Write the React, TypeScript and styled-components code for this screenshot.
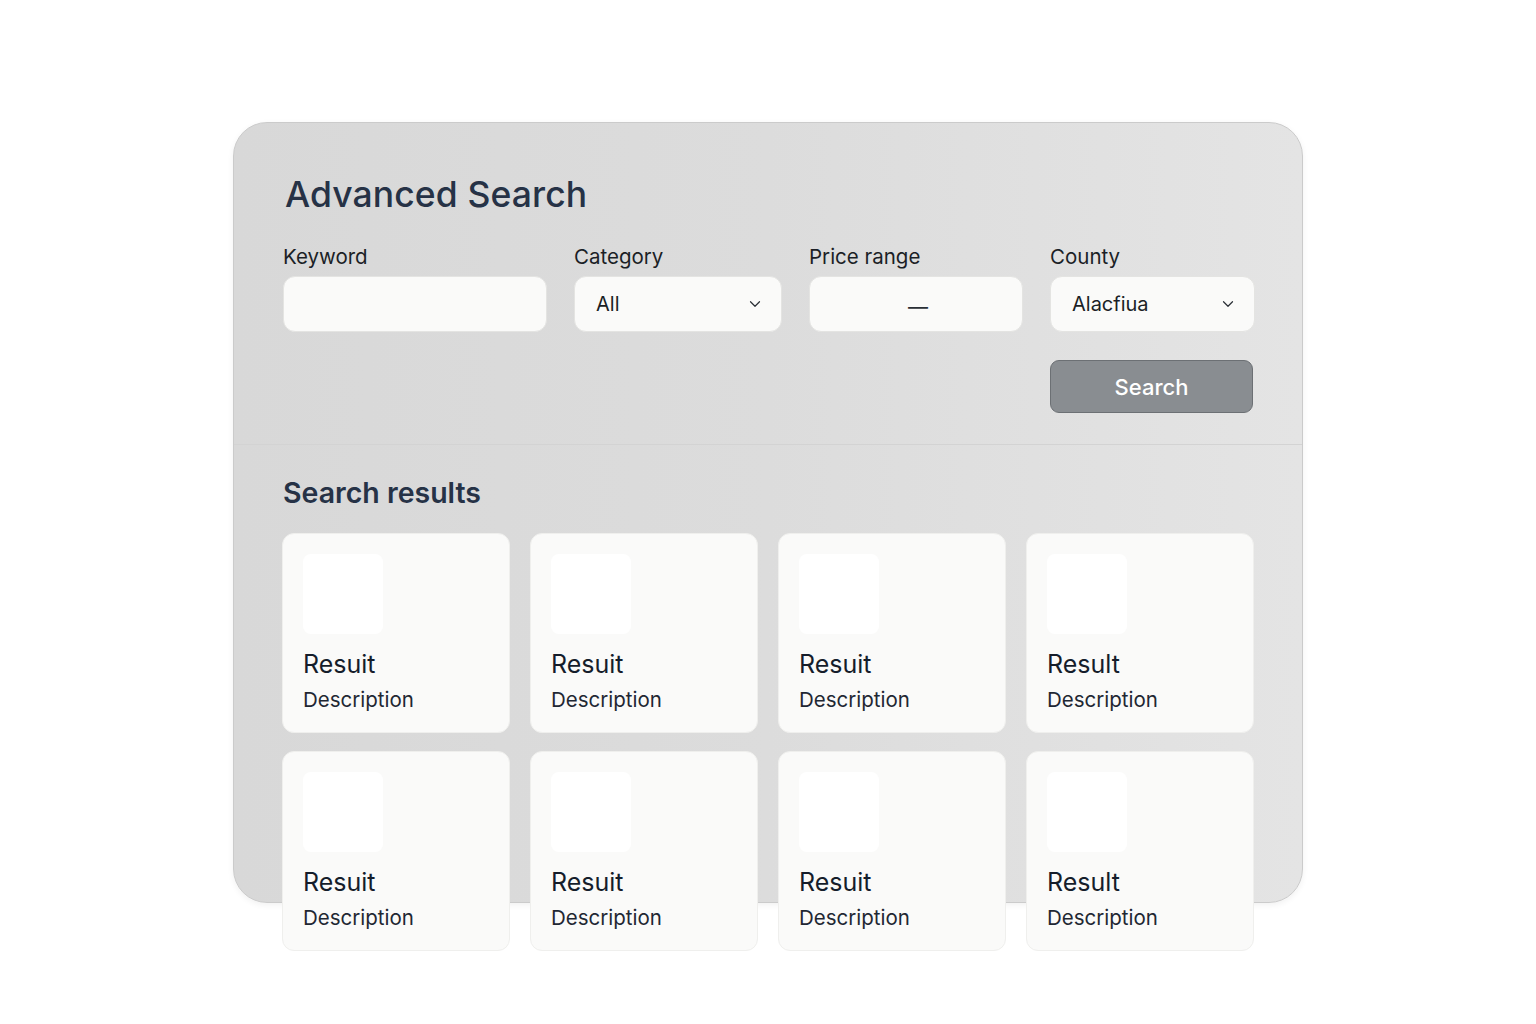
import React from "react";
import styled, { createGlobalStyle } from "styled-components";
import { ChevronDown } from "lucide-react";

const Global = createGlobalStyle`
  html, body { margin: 0; padding: 0; background: #ffffff; }
  body { font-family: Inter, "Noto Sans", "Liberation Sans", sans-serif; color: #1c2430; }
  * { box-sizing: border-box; }
`;

const Page = styled.div`
  width: 1536px;
  min-height: 1024px;
  padding-top: 122px;
  display: flex;
  justify-content: center;
  align-items: flex-start;
`;

const Panel = styled.section`
  width: 1070px;
  height: 781px;
  border-radius: 34px;
  border: 1px solid #cbcbcb;
  background: linear-gradient(90deg, #d8d8d8 0%, #dcdcdc 50%, #e4e4e4 100%);
  box-shadow: 0 2px 6px rgba(0, 0, 0, 0.06);
  display: flex;
  flex-direction: column;
`;

const TopSection = styled.div`
  padding: 50px 48px 31px 49px;
  display: flex;
  flex-direction: column;
`;

const Title = styled.h1`
  margin: 0 0 28px 2px;
  font-size: 35.5px;
  line-height: 44px;
  font-weight: 500;
  color: #263246;
  letter-spacing: 0.1px;
`;

const FieldsRow = styled.div`
  display: grid;
  grid-template-columns: 264px 208px 214px 205px;
  column-gap: 27px;
`;

const Field = styled.div`
  display: flex;
  flex-direction: column;
  gap: 7px;
`;

const Label = styled.label`
  font-size: 20.5px;
  line-height: 24px;
  color: #1b1f26;
`;

const Control = styled.div<{ $center?: boolean }>`
  height: 56px;
  border-radius: 12px;
  background: #fafaf9;
  border: 1px solid #e4e4e2;
  display: flex;
  align-items: center;
  justify-content: ${(p) => (p.$center ? "center" : "space-between")};
  padding: 0 17px 0 21px;
  font-size: 20px;
  color: #1b1f26;
`;

const Dash = styled.span`
  font-size: 20px;
  color: #2a2f36;
  margin-top: 6px;
`;

const Chevron = styled(ChevronDown)`
  width: 18px;
  height: 18px;
  color: #2a2f36;
`;

const ButtonRow = styled.div`
  display: flex;
  justify-content: flex-end;
  margin-top: 28px;
  padding-right: 1px;
`;

const SearchButton = styled.button`
  width: 203px;
  height: 53px;
  border-radius: 9px;
  background: #898d91;
  border: 1px solid #6c7074;
  color: #ffffff;
  font-family: inherit;
  font-size: 22px;
  font-weight: 500;
  cursor: pointer;
`;

const Divider = styled.div`
  height: 3px;
  width: 100%;
  background: #e9e9e9;
  border-top: 1px solid #d3d3d3;
`;

const ResultsSection = styled.div`
  padding: 30px 48px 0 48px;
  display: flex;
  flex-direction: column;
`;

const Subtitle = styled.h2`
  margin: 0 0 22px 1px;
  font-size: 28.5px;
  line-height: 36px;
  font-weight: 600;
  color: #263246;
`;

const CardGrid = styled.div`
  display: grid;
  grid-template-columns: repeat(4, 1fr);
  column-gap: 20px;
  row-gap: 18px;
`;

const Card = styled.div`
  height: 200px;
  border-radius: 12px;
  background: #fafaf9;
  border: 1px solid #efefed;
  padding: 20px 20px 0 20px;
  display: flex;
  flex-direction: column;
`;

const Thumb = styled.div`
  width: 80px;
  height: 80px;
  border-radius: 8px;
  background: #ffffff;
  margin-bottom: 15px;
`;

const CardTitle = styled.div`
  font-size: 25px;
  line-height: 30px;
  color: #151d2b;
  margin-bottom: 8px;
`;

const CardDesc = styled.div`
  font-size: 20.5px;
  line-height: 26px;
  color: #1f2733;
`;

const results = [
  "Resuit", "Resuit", "Resuit", "Result",
  "Resuit", "Resuit", "Resuit", "Result",
];

export default function App() {
  return (
    <>
      <Global />
      <Page>
        <Panel>
          <TopSection>
            <Title>Advanced Search</Title>
            <FieldsRow>
              <Field>
                <Label>Keyword</Label>
                <Control />
              </Field>
              <Field>
                <Label>Category</Label>
                <Control>
                  <span>All</span>
                  <Chevron strokeWidth={1.6} />
                </Control>
              </Field>
              <Field>
                <Label>Price range</Label>
                <Control $center>
                  <Dash>—</Dash>
                </Control>
              </Field>
              <Field>
                <Label>County</Label>
                <Control>
                  <span>Alacfiua</span>
                  <Chevron strokeWidth={1.6} />
                </Control>
              </Field>
            </FieldsRow>
            <ButtonRow>
              <SearchButton>Search</SearchButton>
            </ButtonRow>
          </TopSection>
          <Divider />
          <ResultsSection>
            <Subtitle>Search results</Subtitle>
            <CardGrid>
              {results.map((r, i) => (
                <Card key={i}>
                  <Thumb />
                  <CardTitle>{r}</CardTitle>
                  <CardDesc>Description</CardDesc>
                </Card>
              ))}
            </CardGrid>
          </ResultsSection>
        </Panel>
      </Page>
    </>
  );
}
